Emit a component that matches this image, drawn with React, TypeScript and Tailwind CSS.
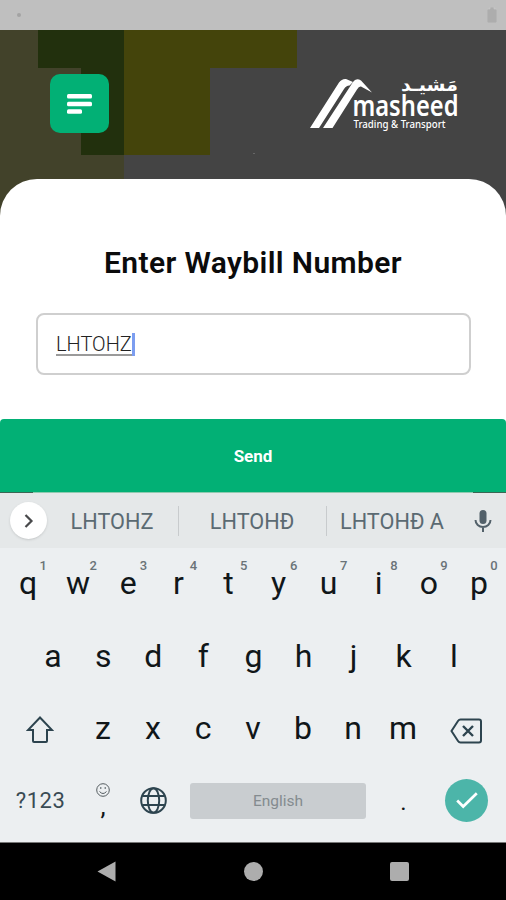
import React from 'react';

const topRow = [
  { letter: 'q', digit: '1' },
  { letter: 'w', digit: '2' },
  { letter: 'e', digit: '3' },
  { letter: 'r', digit: '4' },
  { letter: 't', digit: '5' },
  { letter: 'y', digit: '6' },
  { letter: 'u', digit: '7' },
  { letter: 'i', digit: '8' },
  { letter: 'o', digit: '9' },
  { letter: 'p', digit: '0' },
];
const middleRow = ['a', 's', 'd', 'f', 'g', 'h', 'j', 'k', 'l'];
const bottomRow = ['z', 'x', 'c', 'v', 'b', 'n', 'm'];

const Logo: React.FC = () => (
  <svg className="overflow-visible" width="150" height="56" viewBox="0 0 150 56" fill="#fff">
    <path d="M0 52 29 6.500Q32 2.500 36 3L43 6 39.500 9.500Q36 9.500 34 13L9 52Z" />
    <path d="M13 52 43 6Q46 1.500 51 4.500L62 16.500 51 10.500Q49 10 47 13.500L22.500 52Z" />
    <text x="91" y="15" fontSize="18" fontWeight="700" textLength="57" lengthAdjust="spacingAndGlyphs" style={{ fontFamily: '"DejaVu Sans", sans-serif' }}>
      مَشيـد
    </text>
    <text x="42.500" y="40" fontSize="28" fontWeight="600" textLength="106" lengthAdjust="spacingAndGlyphs" style={{ fontFamily: '"Noto Sans", sans-serif' }}>
      masheed
    </text>
    <text x="43.500" y="52" fontSize="10.500" fontWeight="500" textLength="92" lengthAdjust="spacingAndGlyphs" style={{ fontFamily: '"Noto Sans", sans-serif' }}>
      Trading &amp; Transport
    </text>
  </svg>
);

const Header: React.FC = () => (
  <header className="relative h-[149px] bg-[#444444]">
    {/* Map tiles behind the header and the corners of the sheet */}
    <svg className="absolute left-0 top-0" width="506" height="190" shapeRendering="crispEdges">
      <rect width="506" height="190" fill="#444444" />
      <rect width="124" height="190" fill="#42422a" />
      <path d="M38 0h86v125H81V38H38z" fill="#22300d" />
      <path d="M124 0h173v38h-87v87h-86z" fill="#44440b" />
      <rect x="253" y="123" width="2" height="1" fill="#666" />
    </svg>
    <div className="relative flex items-start justify-between pl-[50px] pr-[46px] pt-11">
      <button className="flex h-[59px] w-[59px] items-center justify-center rounded-[10px] bg-[#02b075]">
        <svg width="25" height="20" viewBox="0 0 25 20" fill="#fff">
          <rect width="25" height="4.600" rx="1.500" />
          <rect y="7.700" width="25" height="4.600" rx="1.500" />
          <rect y="15.200" width="15" height="4.600" rx="1.500" />
        </svg>
      </button>
      <div className="pt-0.5">
        <Logo />
      </div>
    </div>
  </header>
);

const Suggestions: React.FC = () => (
  <div className="flex h-[55px] items-center bg-[#e5e8e9] text-[21.7px] text-[#5b6a72]">
    <button className="ml-[10px] flex h-[37px] w-[37px] items-center justify-center rounded-full bg-white shadow">
      <svg width="10" height="14" viewBox="0 0 10 14" fill="none" stroke="#48494b" strokeWidth="2.200">
        <path d="m1.500 1 6 6-6 6" />
      </svg>
    </button>
    <span className="w-[131px] pr-px pt-1 text-center">LHTOHZ</span>
    <span className="h-[30px] w-px bg-[#c8cbcd]" />
    <span className="w-[147px] pr-px pt-1 text-center">LHTOHĐ</span>
    <span className="h-[30px] w-px bg-[#c8cbcd]" />
    <span className="w-[131px] whitespace-nowrap pr-px pt-1 text-center">LHTOHĐ A</span>
    <svg className="ml-4" width="18" height="22" viewBox="0 0 18 22">
      <rect x="5.500" y="0" width="7" height="14" rx="3.500" fill="#53616a" />
      <path d="M1.500 10a7.500 7 0 0 0 15 0M9 17v5" fill="none" stroke="#53616a" strokeWidth="2" />
    </svg>
  </div>
);

const Keyboard: React.FC = () => (
  <div className="h-[294px] bg-[#eceff1] pl-[3px] text-[32px] leading-[70px] text-[#101619]">
    <div className="flex h-[73px]">
      {topRow.map((key) => (
        <div key={key.letter} className="relative w-[50.1px] text-center">
          {key.letter}
          <span className="absolute left-[36.500px] top-[10px] text-[13px] font-medium leading-[15px] text-[#6a7378]">{key.digit}</span>
        </div>
      ))}
    </div>
    <div className="flex h-[72px] pl-[25px]">
      {middleRow.map((letter) => (
        <div key={letter} className="w-[50.1px] text-center">{letter}</div>
      ))}
    </div>
    <div className="flex h-[72px]">
      <div className="flex w-[75px] items-center justify-center pr-[2px]">
        <svg width="28" height="27" viewBox="0 0 28 27" fill="none" stroke="#2d444f" strokeWidth="2">
          <path d="M14 1.500 26 14h-5v11q0 1-1 1H8q-1 0-1-1V14H2z" />
        </svg>
      </div>
      {bottomRow.map((letter) => (
        <div key={letter} className="w-[50px] text-center">{letter}</div>
      ))}
      <div className="flex w-[75px] items-center justify-center pt-1">
        <svg width="32" height="26" viewBox="0 0 32 26" fill="none" stroke="#2d444f" strokeWidth="2">
          <path d="M10.500 1.500H29q2 0 2 2v19q0 2-2 2H10.500Q9 24.500 8 23L1.500 13 8 3q1-1.500 2.500-1.500z" />
          <path d="m13 8 10 10m0-10L13 18" strokeWidth="2.400" />
        </svg>
      </div>
    </div>
    <div className="flex h-[71px] items-center">
      <div className="w-[75px] pt-px text-center text-[22px] tracking-[0.5px] text-[#3a4b54]">?123</div>
      <div className="flex w-[50px] flex-col items-center">
        <svg className="mt-[-6px]" width="14" height="14" viewBox="0 0 14 14" fill="none" stroke="#555d61">
          <circle cx="7" cy="7" r="6.300" />
          <path d="M3.500 8.500q3.500 4 7 0M4.800 4v2M9.200 4v2" />
        </svg>
        <span className="mt-0.5 h-[14px] text-[26px] leading-[14px]">,</span>
      </div>
      <div className="flex w-[50px] justify-center">
        <svg width="27" height="27" viewBox="0 0 27 27" fill="none" stroke="#2d444f" strokeWidth="2">
          <circle cx="13.500" cy="13.500" r="12.300" />
          <ellipse cx="13.500" cy="13.500" rx="5.700" ry="12.300" />
          <path d="M2.500 9h22M2.500 18h22" />
        </svg>
      </div>
      <div className="ml-[12px] h-[36px] w-[176px] rounded-[3px] bg-[#c9cdd0] text-center text-[15.500px] leading-[37px] text-[#848b8f]">English</div>
      <div className="w-[75px] pt-[3px] text-center text-[24px]">.</div>
      <div className="ml-1 flex h-[43px] w-[43px] items-center justify-center rounded-full bg-[#4cb5a9]">
        <svg width="22" height="17" viewBox="0 0 22 17" fill="none" stroke="#fff" strokeWidth="2.700">
          <path d="m1.200 8.500 6 6L20.800 1.200" />
        </svg>
      </div>
    </div>
  </div>
);

const App: React.FC = () => {
  return (
    <div className="flex h-[900px] w-[506px] flex-col overflow-hidden bg-[#444444] font-[Roboto,sans-serif]">
      {/* Status bar */}
      <div className="flex h-[30px] items-center justify-between bg-[#bfbfbf] pl-[17px] pr-[9px]">
        <span className="h-1 w-1 rounded-full bg-[#a3a3a3]" />
        <svg width="10" height="16" viewBox="0 0 10 16">
          <path d="M3 0h4v2h2q1 0 1 1v12q0 1-1 1H1q-1 0-1-1V3q0-1 1-1h2z" fill="#adadad" stroke="#cdcdcd" strokeWidth="0.500" />
        </svg>
      </div>

      <Header />

      {/* Waybill form */}
      <main className="relative h-[240px] rounded-t-[37px] bg-white px-9 pt-[64px]">
        <h1 className="whitespace-nowrap text-center text-[30px] font-semibold leading-[40px] tracking-[0.38px] text-[#0b0b0b]">Enter Waybill Number</h1>
        <div className="mt-[30px] flex h-[62px] w-[435px] items-center rounded-lg border-2 border-[#cfcfcf] pl-[18px]">
          <span className="mt-0.5 border-b-2 border-[#9a9a9a] text-[20px] font-light leading-[20px] text-[#222]">LHTOHZ</span>
          <span className="h-[23px] w-[3px] bg-[#7c9df0]" />
        </div>
      </main>
      <div className="bg-white">
        <button className="h-[73px] w-full rounded-t bg-[#02b075] pt-0.5 text-[17px] font-bold text-white">Send</button>
      </div>
      <div className="bg-[#3c6654] px-[33px]">
        <div className="h-px bg-[#8fcab0]" />
      </div>

      <Suggestions />
      <Keyboard />

      {/* Navigation bar */}
      <nav className="flex h-[58px] items-center justify-between border-t border-[#777] bg-black pl-[97px] pr-[97px]">
        <svg width="19" height="21" viewBox="0 0 19 21">
          <path d="M18.500.500v20L.500 10.500z" fill="#adadad" />
        </svg>
        <span className="h-[19px] w-[19px] rounded-full bg-[#adadad]" />
        <span className="h-[19px] w-[19px] rounded-[2px] bg-[#adadad]" />
      </nav>
    </div>
  );
};

export default App;
